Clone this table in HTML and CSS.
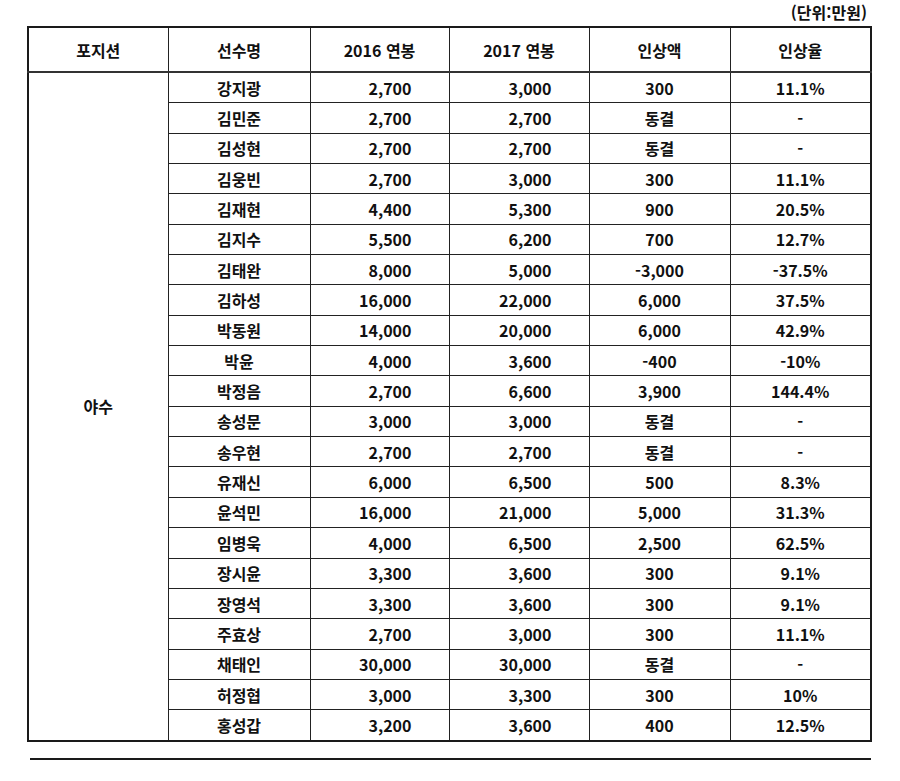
FILE: index.html
```html
<!DOCTYPE html>
<html lang="ko">
<head>
<meta charset="utf-8">
<link rel="stylesheet" href="styles.css">
</head>
<body>
<div class="page">
  <div class="unit">(단위:만원)</div>
  <table class="salary">
    <colgroup>
      <col class="c1"><col class="c2"><col class="c3"><col class="c4"><col class="c5"><col class="c6">
    </colgroup>
    <thead>
      <tr><th>포지션</th><th>선수명</th><th>2016 연봉</th><th>2017 연봉</th><th>인상액</th><th>인상율</th></tr>
    </thead>
    <tbody>
      <tr><td class="pos" rowspan="22">야수</td><td class="name">강지광</td><td class="num">2,700</td><td class="num">3,000</td><td class="mid">300</td><td class="mid">11.1%</td></tr>
      <tr><td class="name">김민준</td><td class="num">2,700</td><td class="num">2,700</td><td class="mid">동결</td><td class="mid">-</td></tr>
      <tr><td class="name">김성현</td><td class="num">2,700</td><td class="num">2,700</td><td class="mid">동결</td><td class="mid">-</td></tr>
      <tr><td class="name">김웅빈</td><td class="num">2,700</td><td class="num">3,000</td><td class="mid">300</td><td class="mid">11.1%</td></tr>
      <tr><td class="name">김재현</td><td class="num">4,400</td><td class="num">5,300</td><td class="mid">900</td><td class="mid">20.5%</td></tr>
      <tr><td class="name">김지수</td><td class="num">5,500</td><td class="num">6,200</td><td class="mid">700</td><td class="mid">12.7%</td></tr>
      <tr><td class="name">김태완</td><td class="num">8,000</td><td class="num">5,000</td><td class="mid">-3,000</td><td class="mid">-37.5%</td></tr>
      <tr><td class="name">김하성</td><td class="num">16,000</td><td class="num">22,000</td><td class="mid">6,000</td><td class="mid">37.5%</td></tr>
      <tr><td class="name">박동원</td><td class="num">14,000</td><td class="num">20,000</td><td class="mid">6,000</td><td class="mid">42.9%</td></tr>
      <tr><td class="name">박윤</td><td class="num">4,000</td><td class="num">3,600</td><td class="mid">-400</td><td class="mid">-10%</td></tr>
      <tr><td class="name">박정음</td><td class="num">2,700</td><td class="num">6,600</td><td class="mid">3,900</td><td class="mid">144.4%</td></tr>
      <tr><td class="name">송성문</td><td class="num">3,000</td><td class="num">3,000</td><td class="mid">동결</td><td class="mid">-</td></tr>
      <tr><td class="name">송우현</td><td class="num">2,700</td><td class="num">2,700</td><td class="mid">동결</td><td class="mid">-</td></tr>
      <tr><td class="name">유재신</td><td class="num">6,000</td><td class="num">6,500</td><td class="mid">500</td><td class="mid">8.3%</td></tr>
      <tr><td class="name">윤석민</td><td class="num">16,000</td><td class="num">21,000</td><td class="mid">5,000</td><td class="mid">31.3%</td></tr>
      <tr><td class="name">임병욱</td><td class="num">4,000</td><td class="num">6,500</td><td class="mid">2,500</td><td class="mid">62.5%</td></tr>
      <tr><td class="name">장시윤</td><td class="num">3,300</td><td class="num">3,600</td><td class="mid">300</td><td class="mid">9.1%</td></tr>
      <tr><td class="name">장영석</td><td class="num">3,300</td><td class="num">3,600</td><td class="mid">300</td><td class="mid">9.1%</td></tr>
      <tr><td class="name">주효상</td><td class="num">2,700</td><td class="num">3,000</td><td class="mid">300</td><td class="mid">11.1%</td></tr>
      <tr><td class="name">채태인</td><td class="num">30,000</td><td class="num">30,000</td><td class="mid">동결</td><td class="mid">-</td></tr>
      <tr><td class="name">허정협</td><td class="num">3,000</td><td class="num">3,300</td><td class="mid">300</td><td class="mid">10%</td></tr>
      <tr><td class="name">홍성갑</td><td class="num">3,200</td><td class="num">3,600</td><td class="mid">400</td><td class="mid">12.5%</td></tr>
    </tbody>
  </table>
  <div class="rule"></div>
</div>
</body>
</html>
```

FILE: styles.css
```css
html, body {
  margin: 0;
  padding: 0;
  background: #ffffff;
}
body {
  font-family: "Noto Sans CJK KR", "Noto Sans", sans-serif;
  color: #111;
  font-weight: 700;
  font-size: 16px;
}
.page {
  width: 900px;
}
.unit {
  height: 26px;
  line-height: 24px;
  text-align: right;
  padding-right: 33px;
  font-size: 16px;
}
.salary {
  margin-left: 27px;
  width: 843px;
  border-collapse: collapse;
  table-layout: fixed;
  border: 2px solid #1a1a1a;
}
.c1 { width: 140px; }
.c2 { width: 142px; }
.c3 { width: 139px; }
.c4 { width: 140px; }
.c5 { width: 141px; }
.c6 { width: 141px; }
.salary th, .salary td {
  border: 1px solid #222;
  padding: 0;
  line-height: 20px;
}
.salary thead th {
  height: 43px;
  border-bottom: 2px solid #333;
  font-weight: 700;
  text-align: center;
}
.salary tbody td {
  height: 29.35px;
}
.name, .mid, .pos {
  text-align: center;
}
.num {
  text-align: right;
  padding-right: 37px !important;
}
.rule {
  margin-left: 30px;
  margin-top: 16px;
  width: 841px;
  height: 2px;
  background: #1a1a1a;
}
```
